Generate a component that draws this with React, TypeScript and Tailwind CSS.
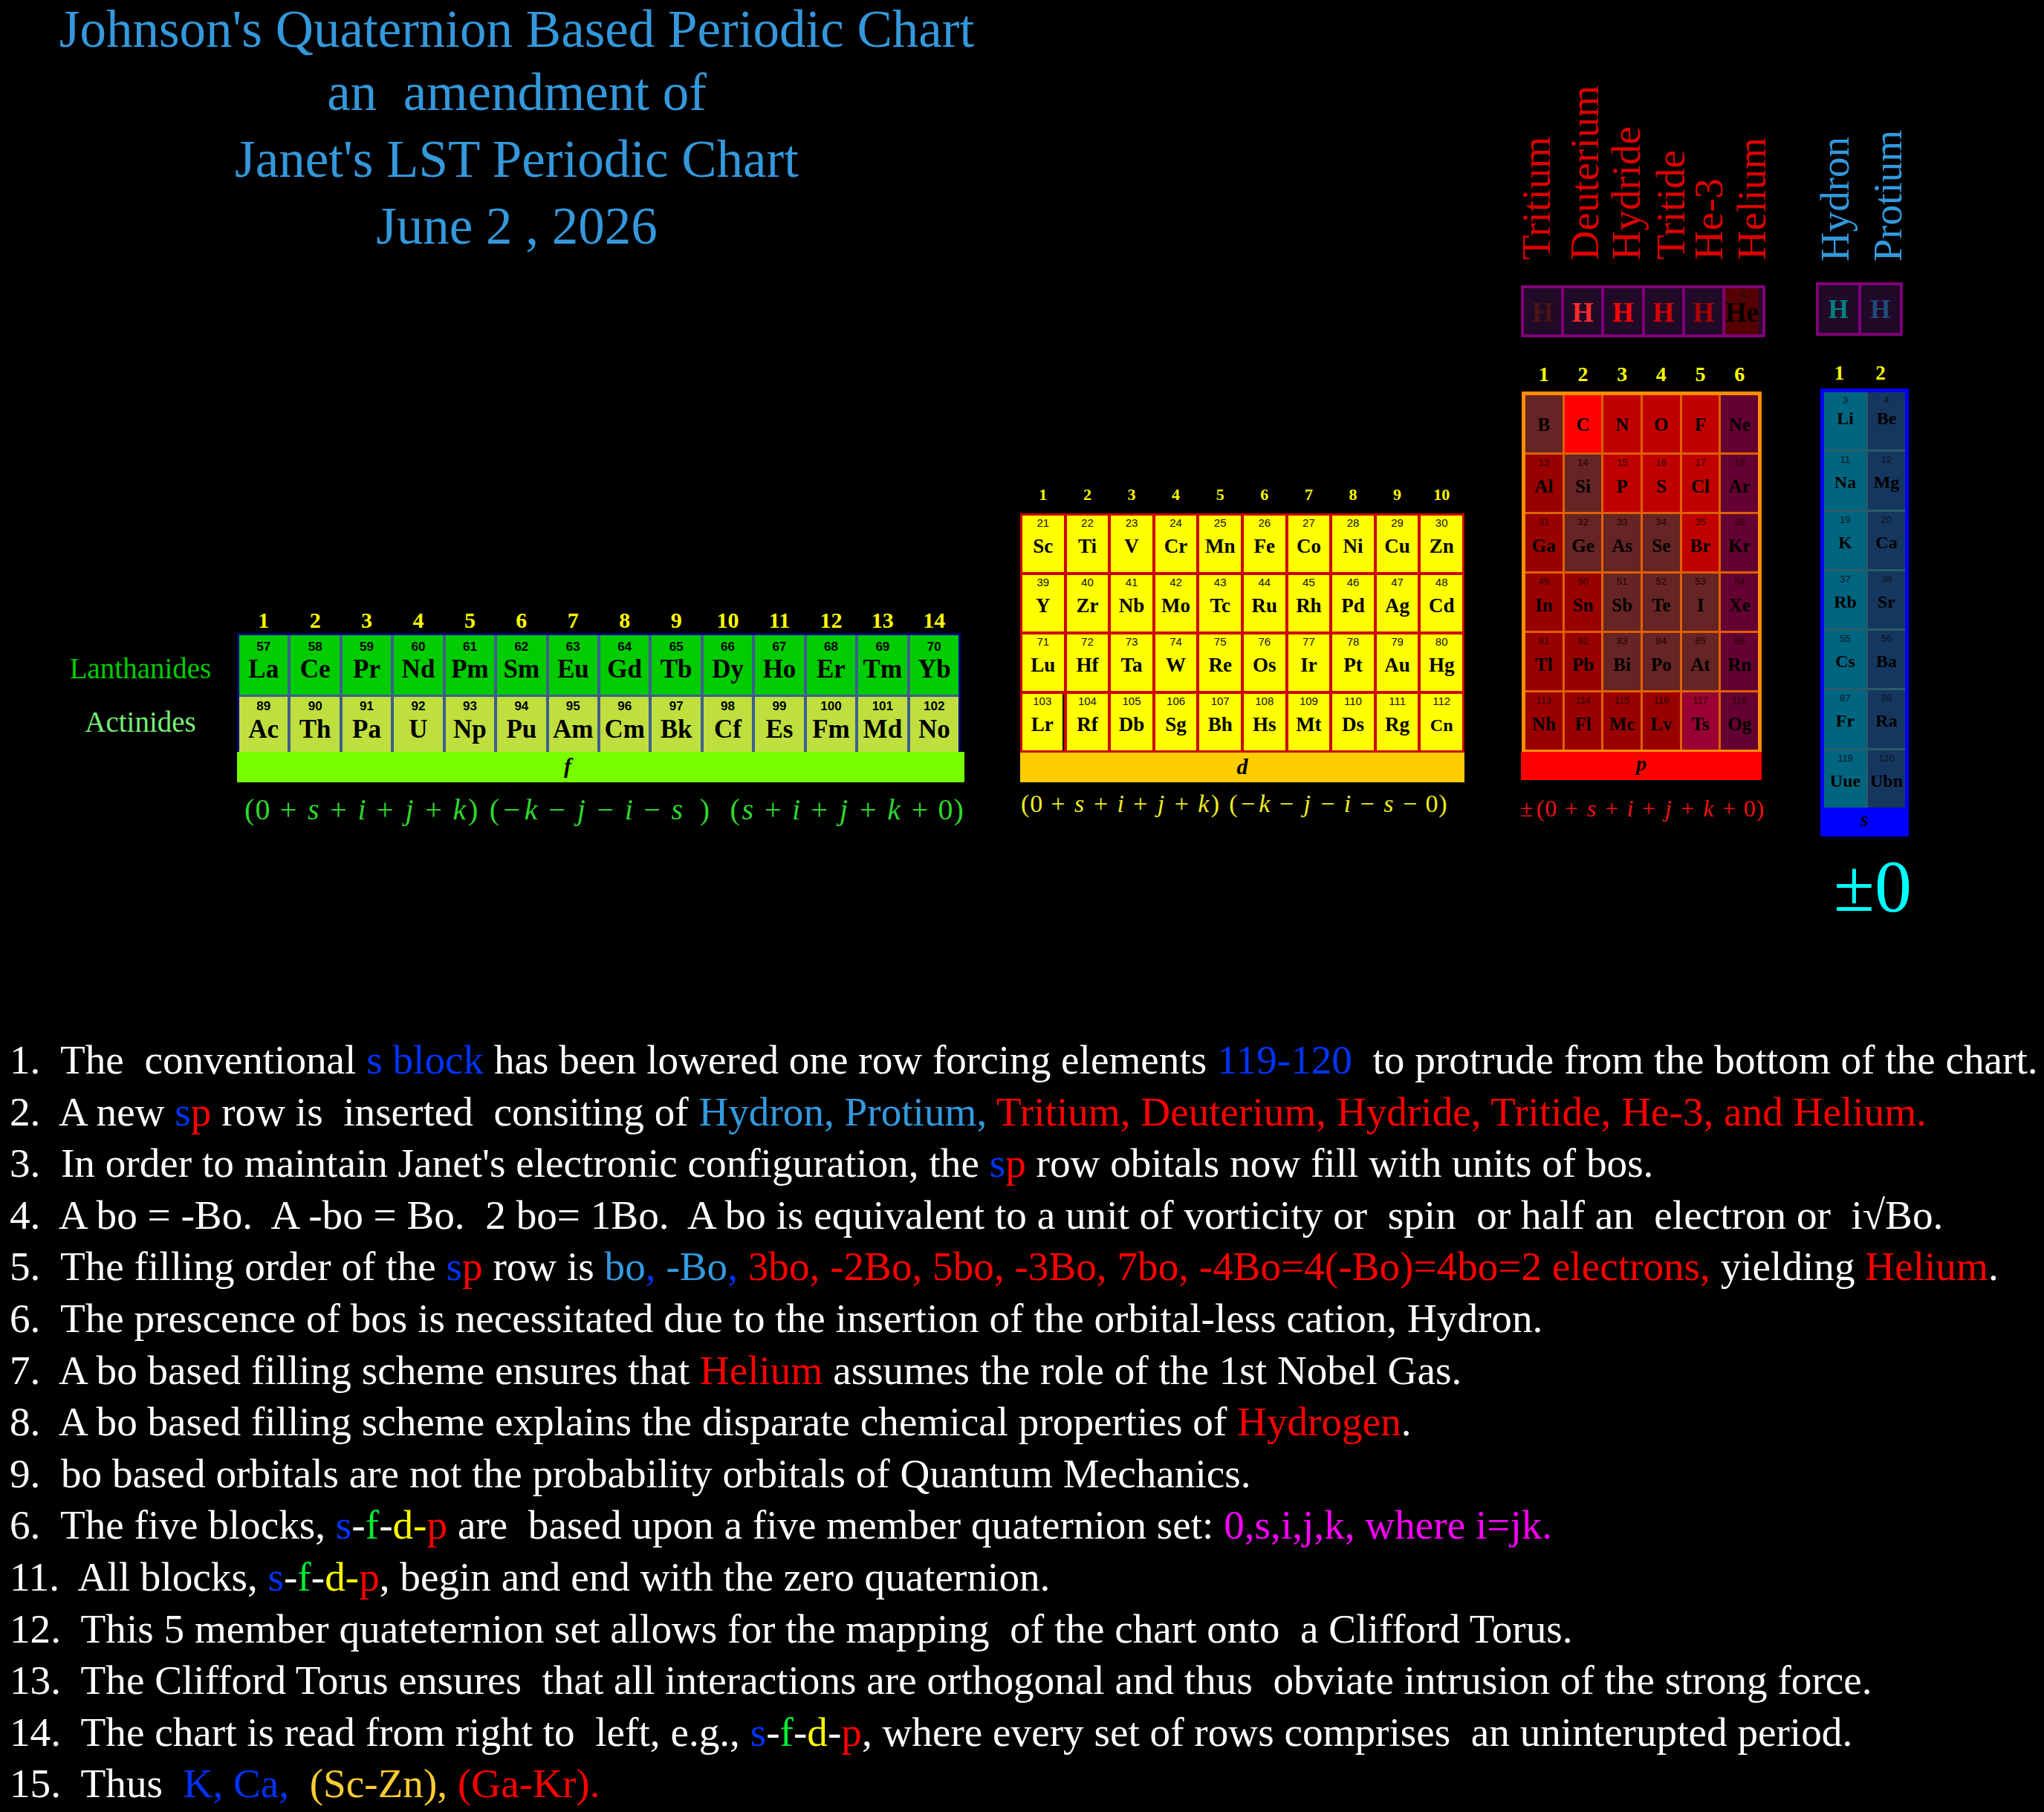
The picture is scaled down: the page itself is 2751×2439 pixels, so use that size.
import React from 'react';

const serif = "font-['Liberation_Serif',serif]";
const sans = "font-['Liberation_Sans',sans-serif]";

// math token -> [glyph, width class]; widths follow TeX metrics so the formulas keep their spread
const TOK: Record<string, [string, string]> = {
  '(': ['(', 'w-[0.389em]'],
  ')': [')', 'w-[0.389em]'],
  '0': ['0', 'w-[0.5em]'],
  '+': ['+', 'w-[1.222em]'],
  '-': ['−', 'w-[1.222em]'],
  n: ['−', 'w-[0.778em]'],
  '±': ['±', 'w-[0.778em]'],
  s: ['s', 'w-[0.469em] italic'],
  i: ['i', 'w-[0.345em] italic'],
  j: ['j', 'w-[0.412em] italic'],
  k: ['k', 'w-[0.521em] italic'],
  _: ['', 'w-[0.33em]'],
  '=': ['', 'w-[0.5em]'],
  '#': ['', 'w-[0.63em]'],
};

const Formula = ({ expr, cls }: { expr: string; cls: string }) => (
  <div className={`flex whitespace-nowrap ${cls}`}>
    {Array.from(expr).map((c, i) => (
      <span key={i} className={`inline-block text-center ${TOK[c][1]}`}>
        {TOK[c][0]}
      </span>
    ))}
  </div>
);

type CellProps = { n?: string; s: string; cls: string; numCls: string; symCls: string };

const Cell = ({ n, s, cls, numCls, symCls }: CellProps) => (
  <div className={`flex flex-col items-center overflow-hidden ${cls}`}>
    {n !== undefined && <div className={numCls}>{n}</div>}
    <div className={`whitespace-nowrap ${symCls}`}>{s}</div>
  </div>
);

const VLabel = ({ text, cls }: { text: string; cls: string }) => (
  <div className={`[writing-mode:vertical-rl] rotate-180 whitespace-nowrap text-[55px] leading-[56px] w-[56px] ${cls}`}>
    {text}
  </div>
);

// f block data
const lan = 'La Ce Pr Nd Pm Sm Eu Gd Tb Dy Ho Er Tm Yb'.split(' ');
const act = 'Ac Th Pa U Np Pu Am Cm Bk Cf Es Fm Md No'.split(' ');

// d block data
const dRows: [number, string[]][] = [
  [21, 'Sc Ti V Cr Mn Fe Co Ni Cu Zn'.split(' ')],
  [39, 'Y Zr Nb Mo Tc Ru Rh Pd Ag Cd'.split(' ')],
  [71, 'Lu Hf Ta W Re Os Ir Pt Au Hg'.split(' ')],
  [103, 'Lr Rf Db Sg Bh Hs Mt Ds Rg Cn'.split(' ')],
];

// p block data
const pRows: [number | null, string[]][] = [
  [null, 'B C N O F Ne'.split(' ')],
  [13, 'Al Si P S Cl Ar'.split(' ')],
  [31, 'Ga Ge As Se Br Kr'.split(' ')],
  [49, 'In Sn Sb Te I Xe'.split(' ')],
  [81, 'Tl Pb Bi Po At Rn'.split(' ')],
  [113, 'Nh Fl Mc Lv Ts Og'.split(' ')],
];
const pColors = [
  ['bg-[#662424]', 'bg-[#ff0000]', 'bg-[#c00000]', 'bg-[#c00000]', 'bg-[#c00000]', 'bg-[#640032]'],
  ['bg-[#990000]', 'bg-[#662424]', 'bg-[#c00000]', 'bg-[#c00000]', 'bg-[#c00000]', 'bg-[#640032]'],
  ['bg-[#990000]', 'bg-[#662424]', 'bg-[#662424]', 'bg-[#662424]', 'bg-[#c00000]', 'bg-[#640032]'],
  ['bg-[#990000]', 'bg-[#990000]', 'bg-[#662424]', 'bg-[#662424]', 'bg-[#662424]', 'bg-[#640032]'],
  ['bg-[#990000]', 'bg-[#990000]', 'bg-[#662424]', 'bg-[#662424]', 'bg-[#662424]', 'bg-[#640032]'],
  ['bg-[#990000]', 'bg-[#990000]', 'bg-[#990000]', 'bg-[#990000]', 'bg-[#990033]', 'bg-[#640032]'],
];

// s block data
const sRows = [
  ['3', 'Li', '4', 'Be'],
  ['11', 'Na', '12', 'Mg'],
  ['19', 'K', '20', 'Ca'],
  ['37', 'Rb', '38', 'Sr'],
  ['55', 'Cs', '56', 'Ba'],
  ['87', 'Fr', '88', 'Ra'],
  ['119', 'Uue', '120', 'Ubn'],
];

// sp row
const hRow = [
  { n: '-1', s: 'H', c: 'text-[#4d1313]', bg: 'bg-[#200a28]' },
  { n: '-2', s: 'H', c: 'text-[#ff2a2a]', bg: 'bg-[#200a28]' },
  { n: '-3', s: 'H', c: 'text-[#ff0000]', bg: 'bg-[#200a28]' },
  { n: '-4', s: 'H', c: 'text-[#d40000]', bg: 'bg-[#200a28]' },
  { n: '-5', s: 'H', c: 'text-[#aa0000]', bg: 'bg-[#200a28]' },
  { n: '-6', s: 'He', c: 'text-[#050000]', bg: 'bg-[#550000] border-r-[5px] border-[#200a28]' },
];

const B = 'text-[#0033ff]';
const LB = 'text-[#3399dd]';
const R = 'text-[#ff0000]';
const G = 'text-[#00ee33]';
const Y = 'text-[#ffff00]';

const SP = () => (
  <>
    <span className={B}>s</span>
    <span className={R}>p</span>
  </>
);

const SFDP = ({ dash = 'text-[#ffff00]' }: { dash?: string }) => (
  <>
    <span className={B}>s</span>-<span className={G}>f</span>-<span className={Y}>d</span>
    <span className={dash}>-</span>
    <span className={R}>p</span>
  </>
);

const App = () => {
  return (
    <div className={`w-[2751px] h-[2439px] overflow-hidden bg-black ${serif}`}>
      <div className="flex h-[1392px] items-start">
        {/* title + f block */}
        <div className="w-[1373px] shrink-0">
          <div className="pl-[18px] text-center text-[71px] leading-[90px] text-[#3498db] whitespace-pre">
            <div className="leading-[79px]">Johnson's Quaternion Based Periodic Chart</div>
            <div>an  amendment of</div>
            <div>Janet's LST Periodic Chart</div>
            <div>June 2 , 2026</div>
          </div>

          <div className="mt-[471px] flex">
            <div className="ml-[59px] w-[260px] shrink-0 text-center text-[39px] leading-[39px]">
              <div className="mt-[60px] text-[#00cc00]">Lanthanides</div>
              <div className="mt-[33px] text-[#77ee77]">Actinides</div>
            </div>
            <div className="w-[979px] shrink-0">
              <div className="grid w-[974px] h-[32px] grid-cols-[repeat(14,minmax(0,1fr))] gap-x-[4px] px-[3px] text-center text-[30px] leading-[30px] font-bold text-[#ffff00]">
                {lan.map((_, i) => (
                  <div key={i}>{i + 1}</div>
                ))}
              </div>
              <div className="grid w-[974px] grid-cols-[repeat(14,minmax(0,1fr))] grid-rows-[80px_74px] gap-x-[4px] gap-y-[3px] border-x-[3px] border-t-[3px] border-[#000080] bg-[#3f5e8e]">
                {lan.map((s, i) => (
                  <Cell
                    key={s}
                    n={String(57 + i)}
                    s={s}
                    cls="bg-[#00cc00]"
                    numCls={`mt-[7px] ${sans} font-bold text-[17px] leading-[17px] text-black`}
                    symCls="mt-[4px] font-bold text-[35px] leading-[35px] text-black"
                  />
                ))}
                {act.map((s, i) => (
                  <Cell
                    key={s}
                    n={String(89 + i)}
                    s={s}
                    cls="bg-[#bfdf3f]"
                    numCls={`mt-[4px] ${sans} font-bold text-[17px] leading-[17px] text-black`}
                    symCls="mt-[5px] font-bold text-[35px] leading-[35px] text-black"
                  />
                ))}
              </div>
              <div className="h-[41px] w-[979px] bg-[#77ff00] pl-[440px] pt-[4px] text-[30px] leading-[30px] font-bold italic text-black">
                f
              </div>
              <Formula
                expr="(0+s+i+j+k)_(nk-j-i-s=)#(s+i+j+k+0)"
                cls="mt-[14px] pl-[9px] text-[40px] leading-[46px] text-[#2ed82e]"
              />
            </div>
          </div>
        </div>

        {/* d block */}
        <div className="mt-[655px] w-[598px] shrink-0">
          <div className="grid h-[36px] grid-cols-[repeat(10,minmax(0,1fr))] gap-x-[4px] px-[3px] text-center text-[22px] leading-[22px] font-bold text-[#ffff00]">
            {dRows[0][1].map((_, i) => (
              <div key={i}>{i + 1}</div>
            ))}
          </div>
          <div className="grid grid-cols-[repeat(10,minmax(0,1fr))] grid-rows-[repeat(4,76px)] gap-[4px] border-[3px] border-[#cc0000] bg-[#cc0000]">
            {dRows.map(([start, syms]) =>
              syms.map((s, i) => (
                <Cell
                  key={s}
                  n={String(start + i)}
                  s={s}
                  cls={s === 'Lr' ? 'bg-[#ffff00] border-r-[2px] border-black' : 'bg-[#ffff00]'}
                  numCls={`mt-[2px] ${sans} text-[15px] leading-[15px] text-[#111]`}
                  symCls={
                    s === 'Cn'
                      ? 'mt-[13px] font-bold text-[24px] leading-[24px] text-black'
                      : 'mt-[11px] font-bold text-[27px] leading-[27px] text-black'
                  }
                />
              ))
            )}
          </div>
          <div className="h-[40px] bg-[#ffcc00] pt-[4px] text-center text-[30px] leading-[30px] font-bold italic text-black">
            d
          </div>
          <Formula expr="(0+s+i+j+k)_(nk-j-i-s-0)" cls="mt-[8px] text-[34px] leading-[42px] text-[#eeee22]" />
        </div>

        {/* p block with sp row */}
        <div className="ml-[69px] mt-[100px] w-[340px] shrink-0">
          <div className="flex h-[250px] items-end text-[#dd0000]">
            <VLabel text="Tritium" cls="" />
            <VLabel text="Deuterium" cls="ml-[9px]" />
            <VLabel text="Hydride" cls="" />
            <VLabel text="Tritide" cls="ml-[4px]" />
            <VLabel text="He-3" cls="-ml-[5px]" />
            <VLabel text="Helium" cls="ml-[2px]" />
          </div>
          <div className="ml-[7px] mt-[34px] grid h-[70px] w-[329px] grid-cols-6 gap-x-[4px] border-[4px] border-[#800078] bg-[#800078]">
            {hRow.map((h) => (
              <Cell
                key={h.n}
                n={h.n}
                s={h.s}
                cls={h.bg}
                numCls="mt-[1px] italic font-bold text-[13px] leading-[13px] text-[#111]"
                symCls={`font-bold text-[37px] leading-[37px] ${h.c}`}
              />
            ))}
          </div>
          <div className="ml-[8px] mt-[36px] grid h-[37px] w-[323px] grid-cols-6 gap-x-[3px] px-[5px] text-center text-[28px] leading-[28px] font-bold text-[#ffff00]">
            {[1, 2, 3, 4, 5, 6].map((c) => (
              <div key={c}>{c}</div>
            ))}
          </div>
          <div className="ml-[8px] grid w-[323px] grid-cols-6 grid-rows-[repeat(6,77px)] gap-[3px] border-x-[5px] border-t-[5px] border-b-[3px] border-[#ff8c00] bg-[#e06000]">
            {pRows.map(([start, syms], r) =>
              syms.map((s, i) => (
                <Cell
                  key={s}
                  n={start === null ? undefined : String(start + i)}
                  s={s}
                  cls={pColors[r][i]}
                  numCls={`mt-[4px] ${sans} text-[13px] leading-[13px] text-[#2a0000]`}
                  symCls={
                    start === null
                      ? 'mt-[27px] font-bold text-[25px] leading-[25px] text-black'
                      : 'mt-[13px] font-bold text-[25px] leading-[25px] text-black'
                  }
                />
              ))
            )}
          </div>
          <div className="ml-[7px] h-[38px] w-[324px] bg-[#ff0000] pt-[2px] text-center text-[28px] leading-[28px] font-bold italic text-black">
            p
          </div>
          <Formula expr="±(0+s+i+j+k+0)" cls="ml-[2px] mt-[18px] text-[32px] leading-[40px] text-[#ee1111]" />
        </div>

        {/* s block */}
        <div className="ml-[62px] mt-[100px] w-[140px] shrink-0">
          <div className="flex h-[252px] items-end text-[#3399dd]">
            <VLabel text="Hydron" cls="" />
            <VLabel text="Protium" cls="ml-[15px]" />
          </div>
          <div className="ml-[2px] mt-[28px] grid h-[72px] w-[117px] grid-cols-2 gap-x-[4px] border-[4px] border-[#800078] bg-[#800078]">
            <Cell
              n="1"
              s="H"
              cls="bg-[#200a28]"
              numCls={`mt-[2px] ${sans} text-[14px] leading-[14px] text-[#111]`}
              symCls="-mt-[1px] font-bold text-[35px] leading-[35px] text-[#008080]"
            />
            <Cell
              n="2"
              s="H"
              cls="bg-[#200a28]"
              numCls={`mt-[2px] ${sans} text-[14px] leading-[14px] text-[#111]`}
              symCls="-mt-[1px] font-bold text-[35px] leading-[35px] text-[#214a7a]"
            />
          </div>
          <div className="mt-[37px] grid h-[34px] w-[119px] grid-cols-[57px_50px] gap-x-[2px] px-[5px] text-center text-[27px] leading-[27px] font-bold text-[#ffff00]">
            <div>1</div>
            <div>2</div>
          </div>
          <div className="ml-[8px] grid w-[119px] grid-cols-[57px_50px] grid-rows-[repeat(7,77.3px)] gap-x-[2px] gap-y-[3px] border-x-[5px] border-t-[5px] border-[#0000ff] bg-[#2b5c6b]">
            {sRows.map(([n1, s1, n2, s2], r) => (
              <React.Fragment key={s1}>
                <Cell
                  n={n1}
                  s={s1}
                  cls="bg-[#006680]"
                  numCls={`mt-[4px] ${sans} text-[13px] leading-[13px] text-[#0a1520]`}
                  symCls={
                    r === 0
                      ? 'mt-[6px] font-bold text-[24px] leading-[24px] text-black'
                      : 'mt-[12px] font-bold text-[24px] leading-[24px] text-black'
                  }
                />
                <Cell
                  n={n2}
                  s={s2}
                  cls="bg-[#15375f]"
                  numCls={`mt-[4px] ${sans} text-[13px] leading-[13px] text-[#0a1520]`}
                  symCls={
                    r === 0
                      ? 'mt-[6px] font-bold text-[24px] leading-[24px] text-black'
                      : 'mt-[12px] font-bold text-[24px] leading-[24px] text-black'
                  }
                />
              </React.Fragment>
            ))}
          </div>
          <div className="ml-[8px] h-[39px] w-[119px] bg-[#0000ff] pt-[2px] text-center text-[28px] leading-[28px] font-bold italic text-black">
            s
          </div>
          <div className="ml-[26px] mt-[17px] whitespace-nowrap text-[100px] leading-[100px] text-[#00ffff]">±0</div>
        </div>
      </div>

      {/* notes */}
      <div className="whitespace-pre pl-[13px] text-[55.2px] leading-[69.6px] text-white">
        <div>
          1.  The  conventional <span className={B}>s block</span> has been lowered one row forcing elements{' '}
          <span className={B}>119-120</span>  to protrude from the bottom of the chart.
        </div>
        <div>
          2.  A new <SP /> row is  inserted  consiting of <span className={LB}>Hydron, Protium,</span>
          <span className={R}> Tritium, Deuterium, Hydride, Tritide, He-3, and Helium.</span>
        </div>
        <div>
          3.  In order to maintain Janet's electronic configuration, the <SP /> row obitals now fill with units of bos.
        </div>
        <div>4.  A bo = -Bo.  A -bo = Bo.  2 bo= 1Bo.  A bo is equivalent to a unit of vorticity or  spin  or half an  electron or  i√Bo.</div>
        <div>
          5.  The filling order of the <SP /> row is <span className={LB}>bo</span>
          <span className={B}>,</span>
          <span className={LB}> -Bo</span>
          <span className={B}>,</span>
          <span className={R}> 3bo, -2Bo, 5bo, -3Bo, 7bo, -4Bo=4(-Bo)=4bo=2 electrons,</span> yielding{' '}
          <span className={R}>Helium</span>.
        </div>
        <div>6.  The prescence of bos is necessitated due to the insertion of the orbital-less cation, Hydron.</div>
        <div>
          7.  A bo based filling scheme ensures that <span className={R}>Helium</span> assumes the role of the 1st Nobel Gas.
        </div>
        <div>
          8.  A bo based filling scheme explains the disparate chemical properties of <span className={R}>Hydrogen</span>.
        </div>
        <div>9.  bo based orbitals are not the probability orbitals of Quantum Mechanics.</div>
        <div>
          6.  The five blocks, <SFDP /> are  based upon a five member quaternion set:{' '}
          <span className="text-[#ff00ff]">0,s,i,j,k, where i=jk.</span>
        </div>
        <div>
          11.  All blocks, <SFDP />, begin and end with the zero quaternion.
        </div>
        <div>12.  This 5 member quateternion set allows for the mapping  of the chart onto  a Clifford Torus.</div>
        <div>13.  The Clifford Torus ensures  that all interactions are orthogonal and thus  obviate intrusion of the strong force.</div>
        <div>
          14.  The chart is read from right to  left, e.g., <SFDP dash="text-white" />, where every set of rows comprises  an
          uninterupted period.
        </div>
        <div>
          15.  Thus  <span className={B}>K, Ca,</span>  <span className="text-[#ffcc33]">(Sc-Zn),</span>{' '}
          <span className={R}>(Ga-Kr).</span>
        </div>
      </div>
    </div>
  );
};

export default App;
